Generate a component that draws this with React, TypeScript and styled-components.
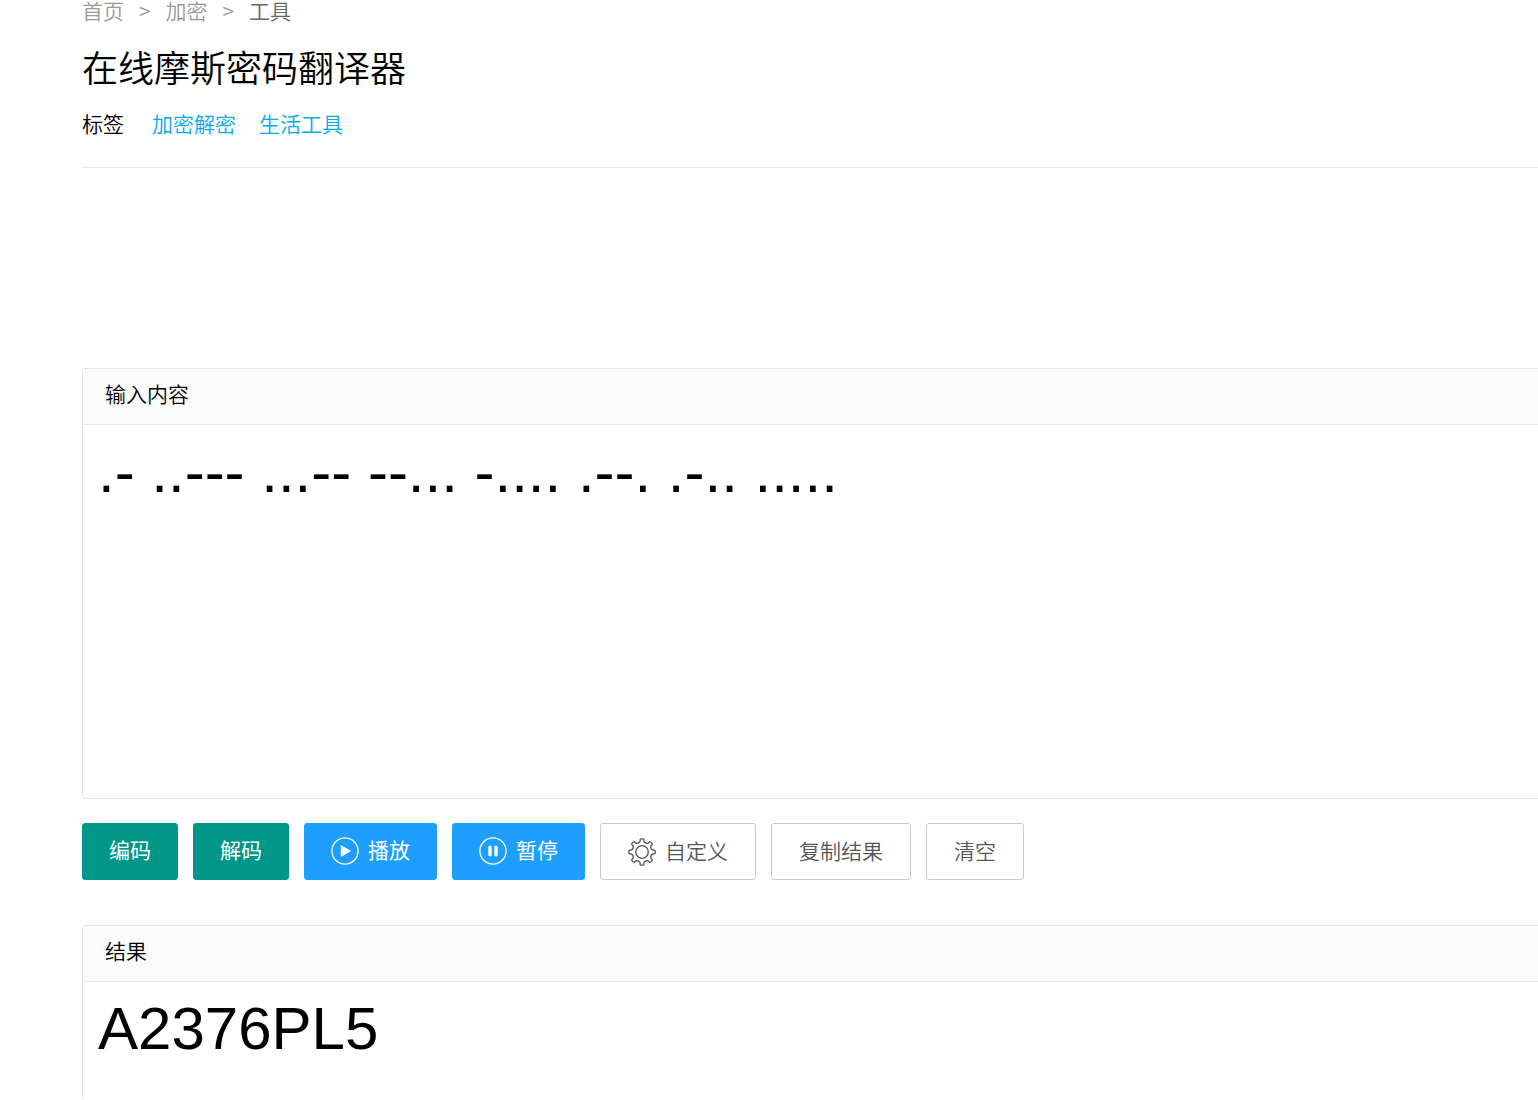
import React, { useState } from "react";
import styled, { createGlobalStyle } from "styled-components";

const GlobalStyle = createGlobalStyle`
  * { box-sizing: border-box; }
  body {
    margin: 0;
    background: #fff;
    color: #000;
    font-family: "Noto Sans CJK SC", "Liberation Sans", sans-serif;
    font-size: 21px;
    font-weight: 350;
    line-height: 24px;
  }
`;

const Page = styled.main`
  display: flex;
  flex-direction: column;
  min-height: 100vh;
  padding-left: 82px;
`;

const Breadcrumb = styled.nav`
  display: flex;
  gap: 15px;
  color: #999;
  line-height: 20px;
`;

const Crumb = styled.a`
  color: #999;
  text-decoration: none;
`;

const CurrentCrumb = styled.span`
  color: #666;
`;

const Title = styled.h1`
  margin: 22px 0 0;
  font-size: 36px;
  font-weight: 350;
  line-height: 48px;
`;

const Tags = styled.div`
  display: flex;
  gap: 23px;
  padding: 21px 0 32px;
  border-bottom: 1px solid #e6e6e6;
`;

const TagLabel = styled.span`
  margin-right: 5px;
`;

const TagLink = styled.a`
  color: #01aaed;
  text-decoration: none;
`;

const Panel = styled.section<{ $grow?: boolean }>`
  display: flex;
  flex-direction: column;
  flex: ${(p) => (p.$grow ? "1 0 auto" : "none")};
  border: 1px solid #e6e6e6;
  border-right: 0;
  border-bottom-width: ${(p) => (p.$grow ? "0" : "1px")};
  border-radius: 3px 0 0 3px;
`;

const InputArea = styled.div`
  margin-top: 200px;
`;

const PanelHeader = styled.label`
  display: block;
  padding: 12px 22px 19px;
  border-bottom: 1px solid #e6e6e6;
  background: #fbfbfb;
`;

const TextBox = styled.textarea`
  display: block;
  flex: 1;
  width: 100%;
  padding: 12px 15px 16px;
  border: 0;
  outline: 0;
  resize: none;
  background: transparent;
  color: #000;
  font-family: "Liberation Sans", Arial, sans-serif;
  font-size: 60px;
  font-weight: 400;
  line-height: 69px;
`;

const Toolbar = styled.div`
  display: flex;
  flex-wrap: wrap;
  gap: 15px;
  padding: 24px 0 45px;
`;

const tones = {
  green: { background: "#009688", border: "#009688", color: "#fff" },
  blue: { background: "#1e9fff", border: "#1e9fff", color: "#fff" },
  plain: { background: "#fff", border: "#c9c9c9", color: "#555" },
};

const Button = styled.button<{ $tone: keyof typeof tones }>`
  display: inline-flex;
  align-items: center;
  gap: 9px;
  height: 57px;
  padding: ${(p) => (p.$tone === "plain" ? "0 27px" : "0 26px 2px")};
  border: 1px solid ${(p) => tones[p.$tone].border};
  border-radius: 3px;
  background: ${(p) => tones[p.$tone].background};
  color: ${(p) => tones[p.$tone].color};
  font: inherit;
  font-weight: ${(p) => (p.$tone === "plain" ? 350 : 400)};
  cursor: pointer;
`;

const ButtonLabel = styled.span`
  padding-bottom: 4px;
`;

const Icon = styled.svg`
  width: 28px;
  height: 28px;
  fill: none;
  stroke: currentColor;
  stroke-width: 1.3;
  stroke-linejoin: round;
`;

const PlayIcon = () => (
  <Icon viewBox="0 0 28 28" aria-hidden="true">
    <circle cx="14" cy="14" r="13.1" />
    <path d="M9.8 8 20.2 14 9.8 20Z" fill="currentColor" stroke="none" />
  </Icon>
);

const PauseIcon = () => (
  <Icon viewBox="0 0 28 28" aria-hidden="true">
    <circle cx="14" cy="14" r="13.1" />
    <path d="M11 10.2V17.8M17 10.2V17.8" strokeWidth="3.4" strokeLinecap="round" />
  </Icon>
);

// Outline of an eight-toothed gear with rounded valleys between the teeth.
const gearPath = (() => {
  const at = (r: number, deg: number) => {
    const a = (deg * Math.PI) / 180;
    return `${(14 + r * Math.sin(a)).toFixed(2)} ${(14 - r * Math.cos(a)).toFixed(2)}`;
  };
  let d = "";
  for (let i = 0; i < 8; i++) {
    const c = i * 45;
    d += `${i ? "L" : "M"}${at(10.8, c - 10)}L${at(12.5, c - 9)}Q${at(13.2, c - 8)} ${at(13.2, c - 5)}`;
    d += `L${at(13.2, c + 5)}Q${at(13.2, c + 8)} ${at(12.5, c + 9)}L${at(10.8, c + 10)}`;
    d += `Q${at(8.8, c + 22.5)} ${at(10.8, c + 35)}`;
  }
  return d + "Z";
})();

const GearIcon = () => (
  <Icon viewBox="0 0 28 28" aria-hidden="true">
    <path d={gearPath} />
    <circle cx="14" cy="14" r="6.3" />
  </Icon>
);

export default function App() {
  const [source, setSource] = useState(".- ..--- ...-- --... -.... .--. .-.. .....");
  const [result, setResult] = useState("A2376PL5");

  return (
    <>
      <GlobalStyle />
      <Page>
        <Breadcrumb>
          <Crumb href="#home">首页</Crumb>
          <span>&gt;</span>
          <Crumb href="#crypto">加密</Crumb>
          <span>&gt;</span>
          <CurrentCrumb>工具</CurrentCrumb>
        </Breadcrumb>
        <Title>在线摩斯密码翻译器</Title>
        <Tags>
          <TagLabel>标签</TagLabel>
          <TagLink href="#crypto-tools">加密解密</TagLink>
          <TagLink href="#life-tools">生活工具</TagLink>
        </Tags>
        <InputArea>
          <Panel>
            <PanelHeader htmlFor="source">输入内容</PanelHeader>
            <TextBox
              id="source"
              rows={5}
              spellCheck={false}
              value={source}
              onChange={(e) => setSource(e.target.value)}
            />
          </Panel>
        </InputArea>
        <Toolbar>
          <Button type="button" $tone="green">
            <ButtonLabel>编码</ButtonLabel>
          </Button>
          <Button type="button" $tone="green">
            <ButtonLabel>解码</ButtonLabel>
          </Button>
          <Button type="button" $tone="blue">
            <PlayIcon />
            <ButtonLabel>播放</ButtonLabel>
          </Button>
          <Button type="button" $tone="blue">
            <PauseIcon />
            <ButtonLabel>暂停</ButtonLabel>
          </Button>
          <Button type="button" $tone="plain">
            <GearIcon />
            <ButtonLabel>自定义</ButtonLabel>
          </Button>
          <Button type="button" $tone="plain">
            <ButtonLabel>复制结果</ButtonLabel>
          </Button>
          <Button
            type="button"
            $tone="plain"
            onClick={() => {
              setSource("");
              setResult("");
            }}
          >
            <ButtonLabel>清空</ButtonLabel>
          </Button>
        </Toolbar>
        <Panel $grow>
          <PanelHeader htmlFor="result">结果</PanelHeader>
          <TextBox id="result" rows={1} spellCheck={false} readOnly value={result} />
        </Panel>
      </Page>
    </>
  );
}
